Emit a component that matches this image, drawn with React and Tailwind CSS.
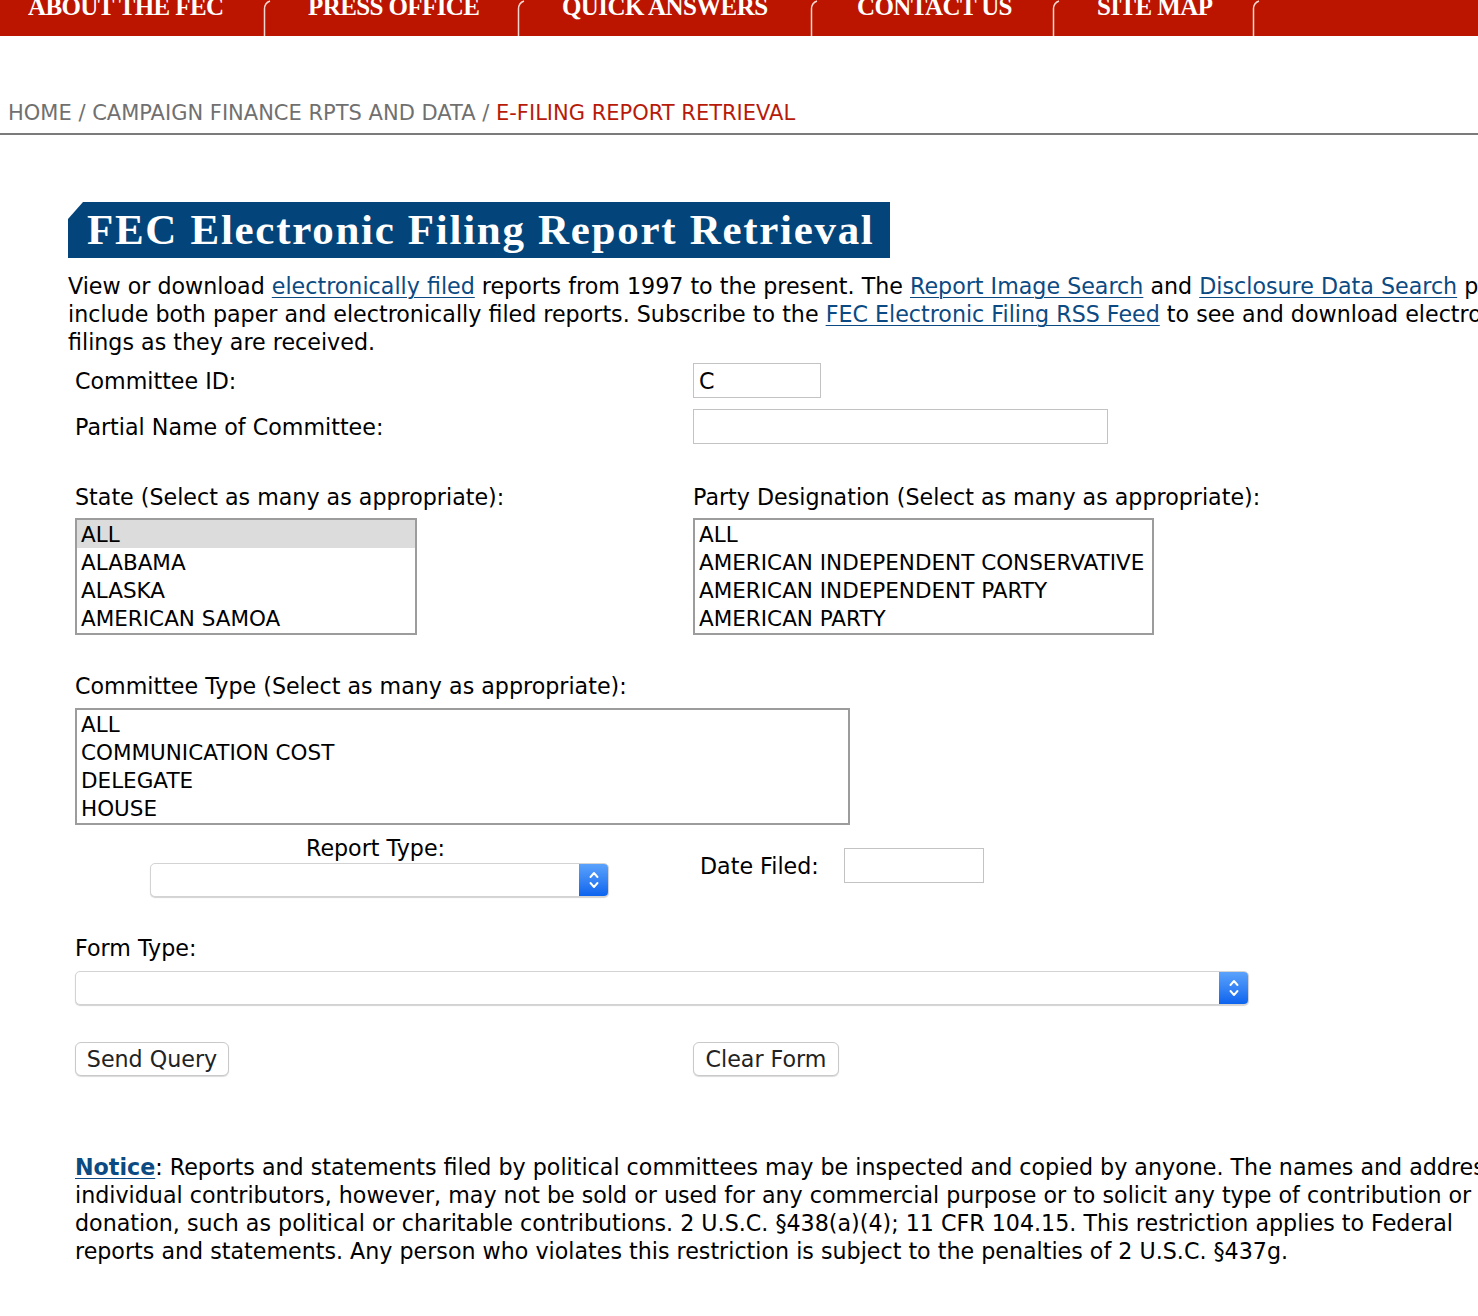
import React from 'react';

const NAV = [
  { label: 'ABOUT THE FEC', w: 'w-[263px]', pl: 'pl-[28px]' },
  { label: 'PRESS OFFICE', w: 'w-[244px]', pl: 'pl-[35px]' },
  { label: 'QUICK ANSWERS', w: 'w-[283px]', pl: 'pl-[35px]' },
  { label: 'CONTACT US', w: 'w-[232px]', pl: 'pl-[37px]' },
  { label: 'SITE MAP', w: 'w-[190px]', pl: 'pl-[35px]' },
];

const STATES = ['ALL', 'ALABAMA', 'ALASKA', 'AMERICAN SAMOA'];
const PARTIES = ['ALL', 'AMERICAN INDEPENDENT CONSERVATIVE', 'AMERICAN INDEPENDENT PARTY', 'AMERICAN PARTY'];
const COMMITTEE_TYPES = ['ALL', 'COMMUNICATION COST', 'DELEGATE', 'HOUSE'];

function TabDivider() {
  return (
    <svg width="10" height="36" viewBox="0 0 10 36" className="shrink-0">
      <path d="M1.5 36 V9 Q1.5 3 7 1" fill="none" stroke="#f3d6d0" strokeWidth="1.5" />
    </svg>
  );
}

function ListBox({ items, highlight, className }) {
  return (
    <div className={`border-2 border-[#9c9c9c] bg-white h-[117px] overflow-hidden text-[21.5px] ${className}`}>
      {items.map((item, i) => (
        <div
          key={item}
          className={`h-[28px] leading-[29px] pl-[4px] whitespace-nowrap ${i === 0 && highlight ? 'bg-[#dcdcdc]' : ''}`}
        >
          {item}
        </div>
      ))}
    </div>
  );
}

function Dropdown({ className }) {
  return (
    <div className={`flex h-[34px] rounded-[5px] border border-[#d3d3d3] bg-white shadow-[0_1px_1px_rgba(0,0,0,0.18)] overflow-hidden ${className}`}>
      <div className="flex-1" />
      <div className="w-[29px] bg-gradient-to-b from-[#5aa2fb] to-[#0b63ee] flex items-center justify-center">
        <svg width="12" height="22" viewBox="0 0 12 22">
          <path d="M2.5 8 L6 4 L9.5 8 M2.5 14 L6 18 L9.5 14" fill="none" stroke="white" strokeWidth="1.9" strokeLinecap="round" strokeLinejoin="round" />
        </svg>
      </div>
    </div>
  );
}

function Button({ children, className }) {
  return (
    <button className={`h-[34px] rounded-[6px] border border-[#c9c9c9] bg-white text-[#222] shadow-[0_1px_1px_rgba(0,0,0,0.15)] ${className}`}>
      {children}
    </button>
  );
}

const link = 'text-[#0b4a82] underline decoration-1 underline-offset-[3px]';

export default function App() {
  return (
    <div className="w-[1478px] min-h-[1316px] overflow-hidden bg-white text-black font-['DejaVu_Sans',sans-serif] text-[22.2px] leading-[28px]">
      {/* top navigation tabs */}
      <nav className="h-[36px] bg-[#bb1500] flex overflow-hidden">
        {NAV.map((item) => (
          <div key={item.label} className="flex">
            <div className={`${item.w} ${item.pl} -mt-[9px] text-white font-['Liberation_Serif',serif] font-bold text-[25px] leading-[31px] tracking-[-0.6px] whitespace-nowrap`}>
              {item.label}
            </div>
            <TabDivider />
          </div>
        ))}
      </nav>

      {/* breadcrumb */}
      <div className="mt-[63px] pl-[8px] text-[21px] leading-[28px] text-[#707070] whitespace-nowrap">
        HOME / CAMPAIGN FINANCE RPTS AND DATA / <span className="text-[#b81a0a]">E-FILING REPORT RETRIEVAL</span>
      </div>
      <div className="mt-[6px] h-[2px] bg-[#7b7b7b]" />

      <div className="pl-[68px] mt-[67px]">
        <h1 className="inline-block h-[56px] pl-[19px] pr-[16px] bg-[#03457a] text-white font-['Liberation_Serif',serif] font-bold text-[43px] leading-[56px] tracking-[1.7px] whitespace-nowrap [clip-path:polygon(0_17px,15px_0,100%_0,100%_100%,0_100%)]">
          FEC Electronic Filing Report Retrieval
        </h1>

        <p className="mt-[14px] whitespace-nowrap">
          View or download <a className={link}>electronically filed</a> reports from 1997 to the present. The{' '}
          <a className={link}>Report Image Search</a> and <a className={link}>Disclosure Data Search</a> pages
          <br />
          include both paper and electronically filed reports. Subscribe to the{' '}
          <a className={link}>FEC Electronic Filing RSS Feed</a> to see and download electronic
          <br />
          filings as they are received.
        </p>
      </div>

      <form className="pl-[75px]">
        <div className="mt-[7px] flex items-center h-[35px]">
          <div className="w-[618px]">Committee ID:</div>
          <div className="w-[128px] h-[35px] border border-[#c3c3c3] pl-[5px] flex items-center">C</div>
        </div>
        <div className="mt-[11px] flex items-center h-[35px]">
          <div className="w-[618px]">Partial Name of Committee:</div>
          <div className="w-[415px] h-[35px] border border-[#c3c3c3]" />
        </div>

        <div className="mt-[39px] flex">
          <div className="w-[618px]">
            <div>State (Select as many as appropriate):</div>
            <ListBox items={STATES} highlight className="mt-[7px] w-[342px]" />
          </div>
          <div>
            <div className="whitespace-nowrap">Party Designation (Select as many as appropriate):</div>
            <ListBox items={PARTIES} className="mt-[7px] w-[461px]" />
          </div>
        </div>

        <div className="mt-[37px]">Committee Type (Select as many as appropriate):</div>
        <ListBox items={COMMITTEE_TYPES} className="mt-[8px] w-[775px]" />

        <div className="mt-[9px] flex items-center">
          <div className="w-[609px] flex flex-col items-center">
            <div className="-ml-[8px]">Report Type:</div>
            <Dropdown className="mt-[1px] w-[459px]" />
          </div>
          <div className="ml-[16px] flex items-center">
            <span>Date Filed:</span>
            <div className="ml-[25px] w-[140px] h-[35px] border border-[#c3c3c3]" />
          </div>
        </div>

        <div className="mt-[37px]">Form Type:</div>
        <Dropdown className="mt-[9px] w-[1174px]" />

        <div className="mt-[37px] flex">
          <div className="w-[618px]">
            <Button className="w-[154px]">Send Query</Button>
          </div>
          <Button className="w-[146px]">Clear Form</Button>
        </div>

        <p className="mt-[77px] whitespace-nowrap">
          <a className={`${link} font-bold`}>Notice</a>: Reports and statements filed by political committees may be inspected and copied by anyone. The names and addresses of
          <br />
          individual contributors, however, may not be sold or used for any commercial purpose or to solicit any type of contribution or
          <br />
          donation, such as political or charitable contributions. 2 U.S.C. §438(a)(4); 11 CFR 104.15. This restriction applies to Federal
          <br />
          reports and statements. Any person who violates this restriction is subject to the penalties of 2 U.S.C. §437g.
        </p>
      </form>
    </div>
  );
}
